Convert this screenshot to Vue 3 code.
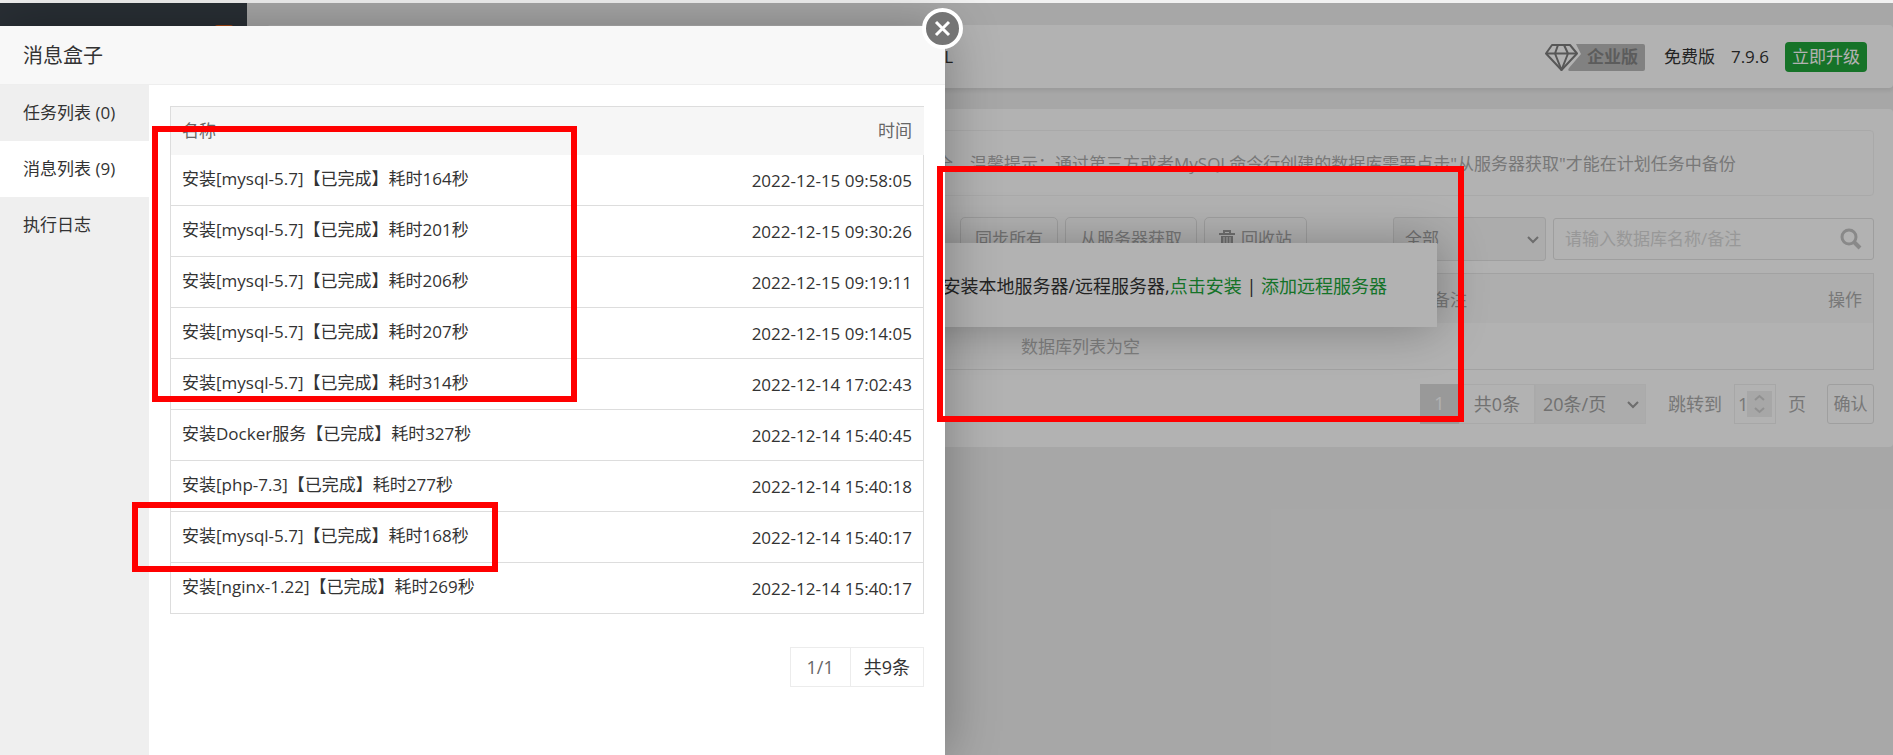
<template>
  <div class="page">
    <div class="strip"></div>
    <div class="layout">
      <aside class="sidebar">
        <span class="sidebar-badge"></span>
      </aside>

      <main class="main">
        <header class="topbar">
          <span class="tab">MySQL</span>
          <div class="version">
            <span class="edition">
              <svg width="102" height="28" viewBox="0 0 102 28" aria-hidden="true">
                <path d="M32 1H99Q101 1 101 3V26Q101 28 99 28H26Q23 28 25 25L37 11Z" fill="#b9b9b9" />
                <g fill="none" stroke="#7d7d7d" stroke-width="2" stroke-linejoin="round">
                  <path d="M8 2H26L33 10.500L17.500 27L2 10.500Z" />
                  <path d="M2 10.500H33M14 2L11 10.500L17.500 27L24 10.500L20 2" />
                </g>
              </svg>
              <b>企业版</b>
            </span>
            <span>免费版</span>
            <span>7.9.6</span>
            <button class="upgrade" type="button">立即升级</button>
          </div>
        </header>

        <section class="card">
          <p class="tip">全，温馨提示：通过第三方或者MySQL命令行创建的数据库需要点击"从服务器获取"才能在计划任务中备份</p>

          <div class="toolbar">
            <div class="tools">
              <button type="button">同步所有</button>
              <button type="button">从服务器获取</button>
              <button type="button">
                <svg width="16" height="18" viewBox="0 0 16 18" aria-hidden="true">
                  <path d="M5 3V1H11V3M0 4H16" fill="none" stroke="#a2a2a2" stroke-width="2" />
                  <path d="M2 6H14V18H2Z" fill="#a2a2a2" />
                  <path d="M5 7V16M8 7V16M11 7V16" stroke="#fff" stroke-width="1" />
                </svg>
                回收站
              </button>
            </div>
            <div class="filters">
              <div class="select select-type">
                <select aria-label="数据库类型">
                  <option>全部</option>
                </select>
                <svg width="12" height="8" viewBox="0 0 12 8"><path d="M1 1L6 6L11 1" /></svg>
              </div>
              <div class="search">
                <input type="text" aria-label="搜索" placeholder="请输入数据库名称/备注" />
                <svg width="22" height="22" viewBox="0 0 22 22" aria-hidden="true">
                  <circle cx="9" cy="9" r="7" fill="none" stroke="#c4c4c4" stroke-width="3" />
                  <path d="M14 14L20 20" stroke="#c4c4c4" stroke-width="4" />
                </svg>
              </div>
            </div>
          </div>

          <table class="db-table">
            <colgroup>
              <col class="col-info" />
              <col />
              <col />
            </colgroup>
            <thead>
              <tr>
                <th></th>
                <th>备注</th>
                <th class="right">操作</th>
              </tr>
            </thead>
            <tbody>
              <tr>
                <td colspan="3">数据库列表为空</td>
              </tr>
            </tbody>
          </table>

          <div class="db-pager">
            <span class="current">1</span>
            <span class="count">共0条</span>
            <div class="select select-size">
              <select aria-label="每页条数">
                <option>20条/页</option>
              </select>
              <svg width="12" height="8" viewBox="0 0 12 8"><path d="M1 1L6 6L11 1" /></svg>
            </div>
            <label class="jump" for="jump-page">跳转到</label>
            <div class="number">
              <input id="jump-page" v-model="jumpPage" type="number" min="1" />
              <svg width="25" height="26" viewBox="0 0 25 26" aria-hidden="true">
                <path d="M0 0H25V26H0Z" fill="#efefef" />
                <path d="M8 9L12.500 5L17 9M8 17L12.500 21L17 17" fill="none" stroke="#cfcfcf" stroke-width="2" />
              </svg>
            </div>
            <span>页</span>
            <button type="button">确认</button>
          </div>
        </section>
      </main>
    </div>

    <div class="notice">
      安装本地服务器/远程服务器,<a href="#">点击安装</a> | <a href="#">添加远程服务器</a>
    </div>

    <div class="mask"></div>

    <div class="dialog" role="dialog" aria-labelledby="dialog-title">
      <button class="close" type="button" aria-label="关闭">
        <svg width="41" height="41" viewBox="0 0 41 41">
          <circle cx="20.500" cy="20.500" r="18.500" fill="#757575" stroke="#fff" stroke-width="4" />
          <path d="M14 14L27 27M27 14L14 27" stroke="#fff" stroke-width="3" />
        </svg>
      </button>
      <h2 id="dialog-title">消息盒子</h2>
      <div class="dialog-body">
        <nav class="menu">
          <button
            v-for="item in menu"
            :key="item"
            type="button"
            :class="{ active: item === activeMenu }"
            @click="activeMenu = item"
          >
            {{ item }}
          </button>
        </nav>
        <div class="content">
          <table class="messages">
            <thead>
              <tr>
                <th>名称</th>
                <th class="right">时间</th>
              </tr>
            </thead>
            <tbody>
              <tr v-for="(msg, i) in messages" :key="i">
                <td>安装{{ msg.name }}【已完成】耗时{{ msg.seconds }}秒</td>
                <td class="date">{{ msg.time }}</td>
              </tr>
            </tbody>
          </table>
          <div class="pager">
            <span class="pages">1/1</span>
            <span>共{{ messages.length }}条</span>
          </div>
        </div>
      </div>
    </div>

    <div class="marker marker-repeat"></div>
    <div class="marker marker-first"></div>
    <div class="marker marker-notice"></div>
  </div>
</template>

<script setup>
import { ref } from "vue";

const menu = ["任务列表 (0)", "消息列表 (9)", "执行日志"];
const activeMenu = ref(menu[1]);
const jumpPage = ref(1);

const messages = [
  { name: "[mysql-5.7]", seconds: 164, time: "2022-12-15 09:58:05" },
  { name: "[mysql-5.7]", seconds: 201, time: "2022-12-15 09:30:26" },
  { name: "[mysql-5.7]", seconds: 206, time: "2022-12-15 09:19:11" },
  { name: "[mysql-5.7]", seconds: 207, time: "2022-12-15 09:14:05" },
  { name: "[mysql-5.7]", seconds: 314, time: "2022-12-14 17:02:43" },
  { name: "Docker服务", seconds: 327, time: "2022-12-14 15:40:45" },
  { name: "[php-7.3]", seconds: 277, time: "2022-12-14 15:40:18" },
  { name: "[mysql-5.7]", seconds: 168, time: "2022-12-14 15:40:17" },
  { name: "[nginx-1.22]", seconds: 269, time: "2022-12-14 15:40:17" },
];
</script>

<style>
body {
  margin: 0;
  background: #f0f0f0;
}
</style>

<style scoped>
* {
  box-sizing: border-box;
}
.page {
  position: relative;
  display: flex;
  flex-direction: column;
  min-height: 100vh;
  overflow: hidden;
  background: #f0f0f0;
  color: #333;
  font-family: "Open Sans", "Noto Sans CJK SC", sans-serif;
  font-size: 17px;
  line-height: 24px;
}
button,
input,
select {
  font: inherit;
  color: inherit;
}
button {
  cursor: pointer;
}
.right {
  text-align: right;
}
.strip {
  height: 3px;
  background: #f1f1f1;
}
.layout {
  flex: 1;
  display: flex;
}
.sidebar {
  width: 247px;
  padding: 22px 13px;
  background: #3c444d;
  display: flex;
  justify-content: flex-end;
  align-items: flex-start;
}
.sidebar-badge {
  width: 20px;
  height: 20px;
  border-radius: 4px;
  background: #f0671a;
}
.main {
  flex: 1;
  padding-top: 22px;
}

/* top bar */
.topbar {
  display: flex;
  justify-content: space-between;
  align-items: center;
  height: 63px;
  margin-left: 20px;
  padding: 0 26px 0 631px;
  background: #fff;
  border-radius: 4px;
  box-shadow: 0 3px 4px rgba(0, 0, 0, 0.08);
}
.version {
  display: flex;
  align-items: center;
  gap: 16px;
}
.edition {
  display: grid;
  align-items: center;
  width: 104px;
  color: #858585;
}
.edition > * {
  grid-area: 1 / 1;
}
.edition b {
  padding-left: 43px;
}
.upgrade {
  height: 30px;
  padding: 0 7px;
  border: 0;
  border-radius: 4px;
  background: #20a53a;
  color: #fff;
  line-height: 30px;
}

/* database card */
.card {
  margin: 21px 0 0 20px;
  padding: 21px 19px 23px 20px;
  background: #fff;
  border-radius: 4px;
  color: #acacac;
}
.tip {
  margin: 0 0 21px;
  padding: 21px 0 19px 648px;
  border: 1px solid #f3f3f3;
  border-radius: 4px;
  white-space: nowrap;
}
.toolbar {
  display: flex;
  justify-content: space-between;
  align-items: center;
  padding-left: 673px;
  margin-bottom: 12px;
}
.tools,
.filters {
  display: flex;
  align-items: center;
  gap: 7px;
}
.tools button {
  display: flex;
  align-items: center;
  gap: 6px;
  height: 44px;
  padding: 0 14px;
  border: 1px solid #e4e4e4;
  border-radius: 5px;
  background: #fff;
}
.select {
  position: relative;
}
.select select {
  width: 100%;
  height: 100%;
  appearance: none;
  border: 1px solid #e4e4e4;
  border-radius: 3px;
  background: #f6f6f6;
  color: #a2a2a2;
  padding: 0 11px;
}
.select svg {
  position: absolute;
  right: 7px;
  top: 50%;
  margin-top: -3px;
  fill: none;
  stroke: #9c9c9c;
  stroke-width: 2;
  pointer-events: none;
}
.select-type {
  width: 153px;
  height: 44px;
}
.search {
  display: flex;
  align-items: center;
  width: 321px;
  height: 42px;
  padding: 0 11px;
  border: 1px solid #e2e2e2;
  border-radius: 3px;
}
.search input {
  flex: 1;
  min-width: 0;
  padding: 0;
  border: 0;
  outline: 0;
  background: transparent;
}
.search input::placeholder {
  color: #dadada;
}
.db-table {
  width: 100%;
  table-layout: fixed;
  border-collapse: separate;
  border-spacing: 0;
  border: 1px solid #e8e8e8;
}
.db-table .col-info {
  width: 1134px;
}
.db-table th {
  height: 49px;
  padding: 2px 11px 0;
  background: #f9f9f9;
  font-weight: 400;
}
.db-table th:not(.right) {
  text-align: left;
}
.db-table td {
  height: 46px;
  padding: 2px 0 0;
  text-align: center;
  color: #b6b6b6;
}
.db-pager {
  display: flex;
  justify-content: flex-end;
  align-items: center;
  height: 40px;
  margin-top: 14px;
  font-size: 18px;
}
.db-pager .current,
.db-pager .count {
  height: 40px;
  line-height: 38px;
  text-align: center;
}
.current {
  width: 39px;
  background: #dcdcdc;
  color: #fff;
}
.count {
  width: 76px;
  border: 1px solid #f2f2f2;
  color: #a2a2a2;
}
.select-size {
  width: 111px;
  height: 40px;
}
.select-size select {
  border-color: #f4f4f4;
  border-radius: 0;
  padding: 0 7px;
}
.jump {
  margin: 0 12px 0 22px;
}
.number {
  display: flex;
  align-items: center;
  width: 42px;
  height: 40px;
  margin-right: 12px;
  padding: 0 3px;
  border: 1px solid #f0f0f0;
}
.number input {
  flex: 1;
  min-width: 0;
  padding: 0;
  border: 0;
  appearance: textfield;
  background: transparent;
}
.number input::-webkit-inner-spin-button {
  display: none;
}
.number svg {
  flex: none;
}
.db-pager button {
  width: 47px;
  height: 40px;
  margin-left: 21px;
  padding: 0;
  border: 1px solid #e4e4e4;
  border-radius: 3px;
  background: #fff;
  font-size: 17px;
}

/* floating notice */
.notice {
  position: absolute;
  top: 243px;
  left: 456px;
  right: 456px;
  padding: 31px 50px 29px;
  background: #fff;
  box-shadow: 1px 1px 50px rgba(0, 0, 0, 0.3);
  font-size: 18px;
  text-align: right;
}
.notice a {
  color: #20a53a;
  text-decoration: none;
}
.mask {
  position: absolute;
  inset: 3px 0 0;
  background: rgba(0, 0, 0, 0.3);
}

/* message box */
.dialog {
  position: absolute;
  top: 26px;
  bottom: 0;
  left: 0;
  display: flex;
  flex-direction: column;
  width: 945px;
  max-width: 100%;
  background: #fff;
  box-shadow: 1px 1px 50px rgba(0, 0, 0, 0.3);
}
.close {
  position: absolute;
  top: -18px;
  right: -18px;
  padding: 0;
  border: 0;
  background: none;
}
.close svg {
  display: block;
}
.dialog h2 {
  margin: 0;
  padding: 2px 23px 0;
  background: #f8f8f8;
  border-bottom: 1px solid #eee;
  font-size: 20px;
  font-weight: 400;
  line-height: 56px;
}
.dialog-body {
  flex: 1;
  display: flex;
}
.menu {
  display: flex;
  flex-direction: column;
  width: 149px;
  background: #efefef;
}
.menu button {
  height: 56px;
  padding: 0 23px;
  border: 0;
  background: none;
  text-align: left;
}
.menu .active {
  background: #fff;
}
.content {
  flex: 1;
  padding: 21px;
}
.messages {
  width: 100%;
  border-collapse: separate;
  border-spacing: 0;
  border-top: 1px solid #ddd;
  border-left: 1px solid #ddd;
}
.messages th {
  height: 48px;
  padding: 0 12px 0 11px;
  background: #f6f6f6;
  color: #666;
  font-weight: 400;
}
.messages th:not(.right) {
  text-align: left;
}
.messages td {
  height: 51px;
  padding: 0 11px 2px;
  border-bottom: 1px solid #ddd;
}
.messages .date {
  padding: 2px 11px 0;
  border-right: 1px solid #ddd;
  text-align: right;
}
.pager {
  display: flex;
  justify-content: flex-end;
  margin-top: 33px;
  font-size: 18px;
}
.pager span {
  padding: 7px 13px;
  border: 1px solid #ececec;
}
.pager .pages {
  padding: 7px 16px;
  border-right: 0;
  color: #666;
}

/* red markers */
.marker {
  position: absolute;
  border: 6px solid #f00;
  pointer-events: none;
}
.marker-repeat {
  top: 126px;
  left: 152px;
  width: 425px;
  height: 276px;
}
.marker-first {
  top: 502px;
  left: 132px;
  width: 366px;
  height: 70px;
}
.marker-notice {
  top: 166px;
  left: 937px;
  width: 527px;
  height: 256px;
}
</style>
